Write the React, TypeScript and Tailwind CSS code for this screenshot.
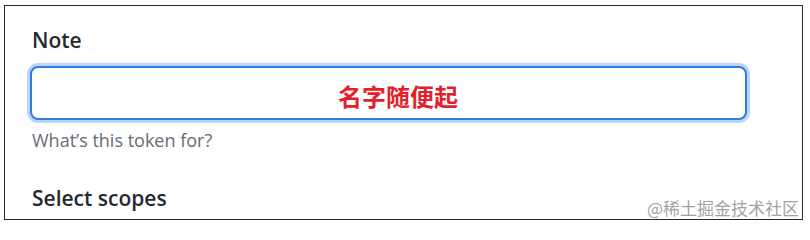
export default function App() {
  return (
    <div className="w-[810px] h-[229px] bg-white pt-[5px] pl-[4px]">
      <div
        className="relative w-[799px] h-[215px] border border-[#2a2a2a] pl-[27px] pr-[54px] pt-[19px]"
        style={{ fontFamily: '"Open Sans", "Noto Sans", sans-serif' }}
      >
        <h2 className="text-[21px] leading-[30px] font-semibold text-[#24292f]">Note</h2>

        <div className="mt-[11px] -ml-[2px] h-[54px] w-[717px] rounded-[8px] border-2 border-[#2f7de1] bg-white shadow-[0_0_0_3px_#b9d6f8] flex items-center pl-[306px] pt-[6px]">
          <span
            className="text-[24px] leading-none font-bold text-[#e41f2b]"
            style={{ fontFamily: '"Noto Sans CJK SC", sans-serif' }}
          >
            名字随便起
          </span>
        </div>

        <p className="mt-[8px] text-[18px] leading-[24px] text-[#656d76]">What’s this token for?</p>

        <h2 className="mt-[31px] text-[21px] leading-[30px] font-semibold text-[#24292f]">Select scopes</h2>

        <span
          className="absolute right-[3px] bottom-[3px] text-[17px] leading-none text-[#a3a3a3]"
          style={{ fontFamily: '"Noto Sans CJK SC", sans-serif' }}
        >
          @稀土掘金技术社区
        </span>
      </div>
    </div>
  );
}
